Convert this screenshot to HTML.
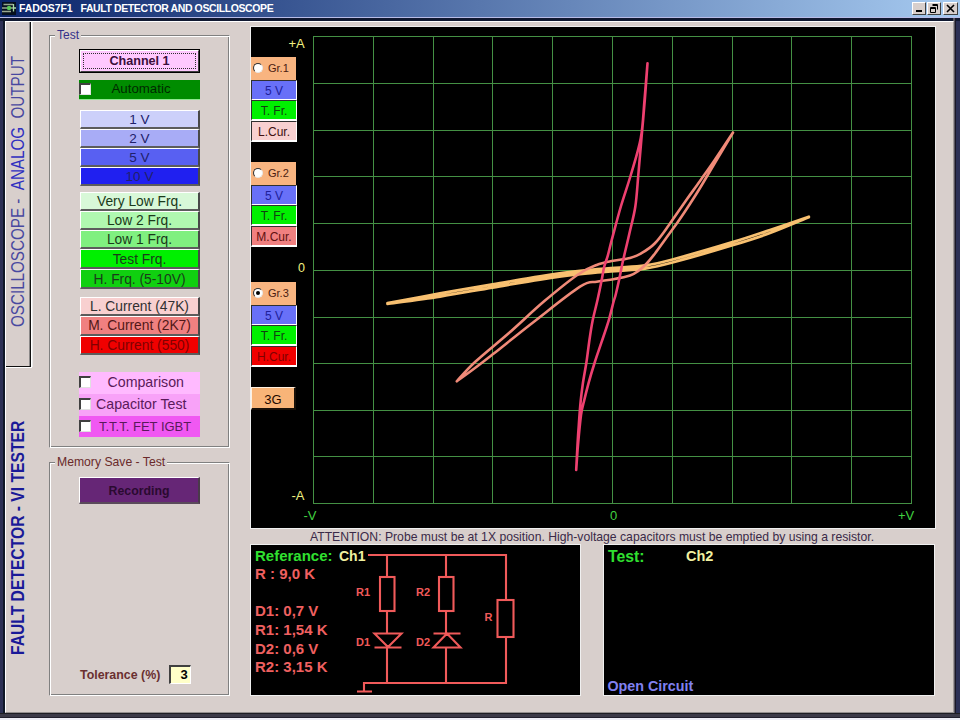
<!DOCTYPE html>
<html><head><meta charset="utf-8">
<style>
*{box-sizing:border-box;margin:0;padding:0}
html,body{width:960px;height:720px;overflow:hidden}
body{position:relative;background:#2c3055;font-family:"Liberation Sans",sans-serif}
.a{position:absolute}
.t{position:absolute;white-space:nowrap;line-height:1}
.btn{position:absolute;border-top:1px solid #fff;border-left:1px solid #fff;border-right:2px solid #484848;border-bottom:2px solid #5c5c5c;text-align:center;white-space:nowrap;line-height:1}
.sb{position:absolute;border-top:1px solid #303030;border-left:1px solid #303030;border-right:1px solid #fff;border-bottom:2px solid #fff;text-align:center;white-space:nowrap;line-height:1}
.cb{position:absolute;width:12px;height:12px;background:#fff;border-top:2px solid #404040;border-left:2px solid #404040;border-right:1px solid #e0e0e0;border-bottom:1px solid #e0e0e0}
</style></head><body>
<!-- title bar -->
<div class="a" style="left:0;top:0;width:960px;height:17px;background:linear-gradient(to right,#0a246a,#a6caf0)"></div>
<div class="a" style="left:0;top:17px;width:960px;height:1px;background:#b8bce8"></div>
<!-- app icon -->
<svg class="a" style="left:0;top:0" width="18" height="17" viewBox="0 0 18 17">
<rect x="2" y="2" width="14" height="13" fill="#06101e"/>
<path d="M3.5 4.5H13M2 8H13M2 11.5H11" stroke="#98a890" stroke-width="1.4"/>
<circle cx="9" cy="8" r="2.2" fill="#58c858"/>
<path d="M13.5 4V11.5M13.5 8H16" stroke="#a8d8a8" stroke-width="1.3"/>
</svg>
<div class="t" style="left:19px;top:3px;font-size:10.5px;font-weight:bold;color:#fff;letter-spacing:-0.1px">FADOS7F1</div><div class="t" style="left:80.5px;top:3px;font-size:10.5px;font-weight:bold;color:#fff;letter-spacing:-0.4px">FAULT DETECTOR AND OSCILLOSCOPE</div>
<!-- window buttons -->
<div class="a" style="left:912px;top:2px;width:14px;height:13px;background:#d8cfcc;border-top:1px solid #fff;border-left:1px solid #fff;border-right:1px solid #404040;border-bottom:1px solid #404040"></div>
<div class="a" style="left:916px;top:10px;width:6px;height:2px;background:#000"></div>
<div class="a" style="left:927px;top:2px;width:14px;height:13px;background:#d8cfcc;border-top:1px solid #fff;border-left:1px solid #fff;border-right:1px solid #404040;border-bottom:1px solid #404040"></div>
<svg class="a" style="left:928px;top:3px" width="12" height="11"><path d="M4.5 1.5h5v5M4.5 2.5h5M2.5 4.5h5v5h-5zM2.5 5.5h5" stroke="#000" fill="none" stroke-width="1"/></svg>
<div class="a" style="left:943px;top:2px;width:15px;height:13px;background:#d8cfcc;border-top:1px solid #fff;border-left:1px solid #fff;border-right:1px solid #404040;border-bottom:1px solid #404040"></div>
<svg class="a" style="left:944px;top:3px" width="13" height="11"><path d="M3 2l7 7M10 2l-7 7" stroke="#000" stroke-width="1.6"/></svg>

<!-- window frame -->
<div class="a" style="left:0;top:18px;width:960px;height:3px;background:#101830"></div>
<div class="a" style="left:3px;top:18px;width:2px;height:696px;background:#101828"></div>
<div class="a" style="left:953px;top:18px;width:2px;height:696px;background:#5a5660"></div>
<div class="a" style="left:955px;top:18px;width:1px;height:696px;background:#1a1826"></div>
<div class="a" style="left:5px;top:21px;width:949px;height:692px;background:#d8cfcc;border-left:1px solid #fff;border-top:1px solid #fff;border-right:1px solid #a09a9a;border-bottom:1px solid #959090"></div>
<div class="a" style="left:0;top:713px;width:960px;height:1px;background:#1e1e24"></div>
<div class="a" style="left:0;top:714px;width:960px;height:3px;background:#3c3a48"></div>
<div class="a" style="left:0;top:717px;width:960px;height:1px;background:#22202e"></div>
<div class="a" style="left:0;top:718px;width:960px;height:2px;background:#f0f0f8"></div>

<!-- left tab (inactive) -->
<div class="a" style="left:29px;top:22px;width:1px;height:344px;background:#8a8888"></div><div class="a" style="left:30px;top:22px;width:1px;height:345px;background:#101010"></div><div class="a" style="left:32px;top:22px;width:1px;height:345px;background:#ecebea"></div>
<div class="a" style="left:6px;top:366px;width:25px;height:1px;background:#101010"></div>
<div class="a" style="left:31px;top:22px;width:1px;height:346px;background:#fff"></div>
<div class="a" style="left:6px;top:367px;width:26px;height:1px;background:#fff"></div>

<div id="main"></div>
<!--LEFT-->
<div class="a" style="left:49px;top:35px;width:181px;height:413px;border-top:1px solid #808080;border-left:1px solid #808080;border-right:1px solid #fff;border-bottom:1px solid #fff;box-shadow:inset 1px 1px 0 #fff,inset -1px -1px 0 #808080"></div>
<div class="t" style="left:55px;top:29px;padding:0 2px;background:#d8cfcc;font-size:12px;color:#34308a">Test</div>
<div class="a" style="left:79px;top:49px;width:121px;height:24px;border:1px solid #000;background:#ffc8ff"><div class="a" style="left:0;top:0;width:119px;height:22px;border-top:1px solid #fff;border-left:1px solid #fff;border-right:1px solid #404040;border-bottom:1px solid #404040"></div><div class="a" style="left:3px;top:3px;width:113px;height:16px;border:1px dotted #303030"></div><div class="t" style="left:0;top:5.3px;width:119px;text-align:center;font-size:12.6px;font-weight:bold;color:#3a0e3a">Channel 1</div></div>
<div class="a" style="left:79px;top:80px;width:121px;height:20px;background:#008c00;border-bottom:1px solid #90e890"></div>
<div class="cb" style="left:79px;top:83px;width:12px;height:12px"></div>
<div class="t" style="left:79px;top:82px;width:121px;text-align:center;font-size:13.3px;color:#002a00;padding-left:3px">Automatic</div>
<div class="btn" style="left:80px;top:110px;width:120px;height:19px;background:#ccd0fa;color:#20206a;font-size:13.5px;padding-top:1.8px;">1 V</div>
<div class="btn" style="left:80px;top:129px;width:120px;height:19px;background:#a8acf6;color:#20206a;font-size:13.5px;padding-top:1.8px;">2 V</div>
<div class="btn" style="left:80px;top:148px;width:120px;height:19px;background:#5860f2;color:#20206a;font-size:13.5px;padding-top:1.8px;">5 V</div>
<div class="btn" style="left:80px;top:167px;width:120px;height:19px;background:#2020f0;color:#20206a;font-size:13.5px;padding-top:1.8px;">10 V</div>
<div class="btn" style="left:80px;top:192px;width:120px;height:19px;background:#d8f8d8;color:#1a3a1a;font-size:13.8px;padding-top:2.2px;">Very Low Frq.</div>
<div class="btn" style="left:80px;top:211px;width:120px;height:19px;background:#b0f8b0;color:#1a3a1a;font-size:13.8px;padding-top:2.2px;">Low 2 Frq.</div>
<div class="btn" style="left:80px;top:230px;width:120px;height:19px;background:#80f080;color:#1a3a1a;font-size:13.8px;padding-top:2.2px;">Low 1 Frq.</div>
<div class="btn" style="left:80px;top:249px;width:120px;height:20px;background:#00f000;color:#1a3a1a;font-size:13.8px;padding-top:2.5px;">Test Frq.</div>
<div class="btn" style="left:80px;top:269px;width:120px;height:20px;background:#10d010;color:#1a3a1a;font-size:13.8px;padding-top:2.5px;">H. Frq. (5-10V)</div>
<div class="btn" style="left:80px;top:297px;width:120px;height:19px;background:#f8d0d0;color:#303030;font-size:13.8px;padding-top:2.2px;">L. Current (47K)</div>
<div class="btn" style="left:80px;top:316px;width:120px;height:20px;background:#f08080;color:#501818;font-size:13.8px;padding-top:2.4px;">M. Current (2K7)</div>
<div class="btn" style="left:80px;top:336px;width:120px;height:19px;background:#f00000;color:#800000;font-size:13.8px;padding-top:2.2px;">H. Current (550)</div>
<div class="a" style="left:79px;top:372px;width:121px;height:22px;background:#ffbaff"></div>
<div class="cb" style="left:79px;top:376px"></div>
<div class="t" style="left:107.5px;top:374.8px;font-size:14.2px;color:#5a1a5a">Comparison</div>
<div class="a" style="left:79px;top:394px;width:121px;height:22px;background:#f8a2f8"></div>
<div class="cb" style="left:79px;top:398px"></div>
<div class="t" style="left:96px;top:397px;font-size:14.2px;color:#5a1a5a">Capacitor Test</div>
<div class="a" style="left:79px;top:416px;width:121px;height:21px;background:#f058f2"></div>
<div class="cb" style="left:79px;top:420px"></div>
<div class="t" style="left:99px;top:420px;font-size:13px;color:#5a1a5a">T.T.T. FET IGBT</div>
<div class="a" style="left:49px;top:462px;width:181px;height:234px;border-top:1px solid #808080;border-left:1px solid #808080;border-right:1px solid #fff;border-bottom:1px solid #fff;box-shadow:inset 1px 1px 0 #fff,inset -1px -1px 0 #808080"></div>
<div class="t" style="left:55px;top:456px;padding:0 2px;background:#d8cfcc;font-size:12.2px;color:#6a2a2a">Memory Save - Test</div>
<div class="btn" style="left:79px;top:477px;width:121px;height:27px;background:#662676;color:#2a0a30;border-right-color:#4a3a4a;border-bottom-color:#5a4a5a;font-size:12.3px;font-weight:bold;padding-top:6.8px">Recording</div>
<div class="t" style="left:80px;top:668.5px;font-size:12.4px;font-weight:bold;color:#6a3030">Tolerance (%)</div>
<div class="a" style="left:169px;top:665px;width:22px;height:19px;background:#ffffc8;border-top:2px solid #404040;border-left:2px solid #404040;border-right:1px solid #fff;border-bottom:1px solid #fff"></div>
<div class="t" style="left:180.5px;top:668px;font-size:13px;font-weight:bold;color:#000">3</div>
<!--/LEFT-->
<!--RIGHT-->
<div class="a" style="left:250px;top:26px;width:686px;height:503px;background:#000;border:1px solid #f0f0f0"></div>
<svg class="a" style="left:0;top:0" width="960" height="720" shape-rendering="crispEdges"><path d="M313.5 36V503.5M373.5 36V503.5M433.5 36V503.5M492.5 36V503.5M552.5 36V503.5M612.5 36V503.5M672.5 36V503.5M732.5 36V503.5M791.5 36V503.5M851.5 36V503.5M911.5 36V503.5M313 36.5H911.5M313 83.5H911.5M313 130.5H911.5M313 176.5H911.5M313 223.5H911.5M313 270.5H911.5M313 317.5H911.5M313 363.5H911.5M313 410.5H911.5M313 456.5H911.5M313 503.5H911.5" stroke="#449044" stroke-width="1" fill="none"/></svg>
<!--CURVES--><svg class="a" style="left:0;top:0" width="960" height="720"><g fill="none" stroke-linejoin="round" stroke-linecap="round"><path d="M387.5 303.2C396.2 301.6 422.5 296.6 440.0 293.5C457.5 290.4 475.8 287.3 492.5 284.5C509.2 281.7 525.4 278.8 540.0 276.5C554.6 274.2 567.5 272.4 580.0 271.0C592.5 269.6 604.2 268.9 615.0 268.0C625.8 267.1 635.4 266.9 645.0 265.5C654.6 264.1 657.9 263.4 672.5 259.5C687.1 255.6 716.2 247.2 732.5 242.2C748.8 237.3 757.3 234.2 770.0 230.0C782.7 225.8 802.3 219.0 808.8 216.8M387.5 303.8C396.2 302.6 422.5 299.2 440.0 296.5C457.5 293.8 475.8 290.3 492.5 287.5C509.2 284.7 525.4 281.8 540.0 279.5C554.6 277.2 567.5 275.4 580.0 274.0C592.5 272.6 604.2 271.9 615.0 271.0C625.8 270.1 635.4 269.9 645.0 268.5C654.6 267.1 657.9 266.4 672.5 262.5C687.1 258.6 716.2 250.2 732.5 245.2C748.8 240.3 757.3 237.7 770.0 233.0C782.7 228.3 802.3 219.8 808.8 217.2" stroke="#f8c070" stroke-width="2.8"/><path d="M456.8 381.3C459.8 378.1 466.4 370.0 475.0 362.0C483.6 354.0 496.8 343.6 508.4 333.5C520.0 323.4 532.8 310.9 544.4 301.1C556.0 291.3 569.3 280.5 578.0 274.5C586.7 268.5 590.8 267.3 596.7 265.0C602.6 262.7 607.8 262.0 613.3 260.8C618.8 259.6 625.4 259.1 630.0 257.9C634.6 256.7 636.7 256.0 640.8 253.6C644.9 251.2 650.1 248.2 654.7 243.5C659.3 238.8 663.4 232.7 668.6 225.5C673.8 218.3 680.8 207.9 686.0 200.5C691.2 193.1 695.3 187.7 700.0 181.0C704.7 174.3 708.9 168.6 714.4 160.5C719.9 152.4 729.9 137.2 733.0 132.5M733.0 132.5C730.5 136.8 723.3 148.8 717.8 158.0C712.3 167.2 704.8 180.1 700.0 188.0C695.2 195.9 692.6 199.8 688.9 205.5C685.2 211.2 681.9 216.2 677.8 222.0C673.7 227.8 668.2 235.2 664.4 240.5C660.6 245.8 658.0 249.7 655.0 253.5C652.0 257.3 649.5 260.6 646.7 263.5C643.9 266.4 641.1 269.0 638.3 271.0C635.5 273.0 634.2 274.1 630.0 275.5C625.8 276.9 618.8 278.2 613.3 279.2C607.8 280.2 602.2 280.4 596.7 281.7C591.2 282.9 590.6 279.9 580.0 286.7C569.4 293.4 547.7 311.1 533.3 322.2C518.9 333.3 503.5 345.9 493.8 353.5C484.1 361.1 481.2 363.4 475.0 368.0C468.8 372.6 459.8 379.1 456.8 381.3" stroke="#f08a78" stroke-width="2.6"/><path d="M576.2 470.0C576.4 465.8 577.1 452.5 577.5 445.0C577.9 437.5 578.2 432.5 578.8 425.0C579.3 417.5 580.1 406.9 580.8 400.0C581.5 393.1 582.0 389.6 582.9 383.3C583.8 377.1 585.3 369.4 586.4 362.5C587.5 355.6 588.2 348.6 589.2 341.7C590.2 334.8 591.2 327.8 592.6 320.8C594.0 313.9 596.0 306.8 597.5 300.0C599.0 293.2 600.6 285.6 601.7 280.0C602.8 274.4 603.2 270.6 604.2 266.7C605.2 262.8 606.2 261.1 607.5 256.7C608.8 252.2 609.5 248.4 611.7 240.0C614.0 231.6 617.8 216.8 621.0 206.0C624.2 195.2 627.5 186.3 630.8 175.0C634.1 163.7 638.5 150.5 640.8 138.0C643.1 125.5 643.4 112.5 644.5 100.0C645.6 87.5 647.0 69.4 647.5 63.3M647.5 63.3C647.0 69.4 645.8 87.5 644.8 100.0C643.8 112.5 642.6 125.5 641.5 138.0C640.4 150.5 639.3 163.6 638.3 175.0C637.3 186.4 636.8 197.0 635.3 206.7C633.8 216.4 631.5 224.0 629.5 233.0C627.5 242.0 624.7 253.3 623.0 260.8C621.3 268.3 620.7 272.4 619.5 278.0C618.3 283.6 616.8 290.2 615.8 294.2C614.8 298.2 614.7 297.6 613.5 302.0C612.3 306.4 610.6 314.2 608.6 320.8C606.6 327.4 604.0 334.8 601.7 341.7C599.4 348.6 596.9 355.6 594.7 362.5C592.5 369.4 590.2 377.1 588.5 383.3C586.8 389.6 585.5 394.7 584.3 400.0C583.0 405.3 582.0 407.5 581.0 415.0C580.0 422.5 578.8 435.8 578.0 445.0C577.2 454.2 576.5 465.8 576.2 470.0" stroke="#ee4070" stroke-width="2.6"/></g></svg><!--/CURVES-->
<div class="t" style="left:288.5px;top:36.5px;font-size:13px;color:#f0f080">+A</div>
<div class="t" style="left:298px;top:261.5px;font-size:12.5px;color:#f0f080">0</div>
<div class="t" style="left:291.5px;top:488.5px;font-size:13px;color:#f0f080">-A</div>
<div class="t" style="left:303.5px;top:508.5px;font-size:13px;color:#40d040">-V</div>
<div class="t" style="left:610px;top:508.5px;font-size:13px;color:#40d040">0</div>
<div class="t" style="left:898px;top:508.5px;font-size:13px;color:#40d040">+V</div>
<div class="a" style="left:251px;top:57px;width:45px;height:23px;background:#f8b480"></div>
<div class="a" style="left:252.5px;top:63px;width:10px;height:10px;border-radius:50%;background:#fff;border-top:1.5px solid #303030;border-left:1.5px solid #303030;border-right:1px solid #e8e8e8;border-bottom:1px solid #e8e8e8"></div>
<div class="t" style="left:268px;top:63px;font-size:11px;color:#4a2010">Gr.1</div>
<div class="sb" style="left:251px;top:80px;width:46px;height:21px;background:#6870f8;color:#20209a;font-size:12px;padding-top:4px">5 V</div>
<div class="sb" style="left:251px;top:100px;width:46px;height:21px;background:#00f000;color:#104010;font-size:12px;padding-top:4px">T. Fr.</div>
<div class="sb" style="left:251px;top:121px;width:46px;height:21px;background:#f8d0d0;color:#401010;font-size:12px;padding-top:4px">L.Cur.</div>
<div class="a" style="left:251px;top:162px;width:45px;height:23px;background:#f8b480"></div>
<div class="a" style="left:252.5px;top:168px;width:10px;height:10px;border-radius:50%;background:#fff;border-top:1.5px solid #303030;border-left:1.5px solid #303030;border-right:1px solid #e8e8e8;border-bottom:1px solid #e8e8e8"></div>
<div class="t" style="left:268px;top:168px;font-size:11px;color:#4a2010">Gr.2</div>
<div class="sb" style="left:251px;top:185px;width:46px;height:21px;background:#6870f8;color:#20209a;font-size:12px;padding-top:4px">5 V</div>
<div class="sb" style="left:251px;top:205px;width:46px;height:21px;background:#00f000;color:#104010;font-size:12px;padding-top:4px">T. Fr.</div>
<div class="sb" style="left:251px;top:226px;width:46px;height:21px;background:#f08080;color:#601010;font-size:12px;padding-top:4px">M.Cur.</div>
<div class="a" style="left:251px;top:282px;width:45px;height:23px;background:#f8b480"></div>
<div class="a" style="left:252.5px;top:288px;width:10px;height:10px;border-radius:50%;background:#fff;border-top:1.5px solid #303030;border-left:1.5px solid #303030;border-right:1px solid #e8e8e8;border-bottom:1px solid #e8e8e8"></div>
<div class="a" style="left:255.5px;top:291px;width:4px;height:4px;border-radius:50%;background:#000"></div>
<div class="t" style="left:268px;top:288px;font-size:11px;color:#4a2010">Gr.3</div>
<div class="sb" style="left:251px;top:305px;width:46px;height:21px;background:#6870f8;color:#20209a;font-size:12px;padding-top:4px">5 V</div>
<div class="sb" style="left:251px;top:325px;width:46px;height:21px;background:#00f000;color:#104010;font-size:12px;padding-top:4px">T. Fr.</div>
<div class="sb" style="left:251px;top:346px;width:46px;height:21px;background:#f00000;color:#800000;font-size:12px;padding-top:4px">H.Cur.</div>
<div class="btn" style="left:251px;top:387px;width:45px;height:23px;background:#f8b478;color:#200800;font-size:13px;padding-top:4.5px;border-top-color:#fff0e0;border-left-color:#fff0e0;border-right-color:#181008;border-bottom-color:#181008">3G</div>
<div class="t" style="left:310px;top:531px;font-size:12.2px;color:#3a2a48">ATTENTION: Probe must be at 1X position. High-voltage capacitors must be emptied by using a resistor.</div>
<div class="a" style="left:250px;top:544px;width:331px;height:152px;background:#000;border:1px solid #f0f0f0"></div>
<div class="a" style="left:603px;top:544px;width:332px;height:152px;background:#000;border:1px solid #f0f0f0"></div>
<div class="t" style="left:255px;top:547.5px;font-size:15px;font-weight:bold;color:#30e030">Referance:</div>
<div class="t" style="left:339px;top:549px;font-size:14px;font-weight:bold;color:#f0f0a0">Ch1</div>
<div class="t" style="left:255px;top:565.9px;font-size:15px;font-weight:bold;color:#f06060">R : 9,0 K</div>
<div class="t" style="left:255px;top:603.0px;font-size:15px;font-weight:bold;color:#f06060">D1: 0,7 V</div>
<div class="t" style="left:255px;top:621.9px;font-size:15px;font-weight:bold;color:#f06060">R1: 1,54 K</div>
<div class="t" style="left:255px;top:640.7px;font-size:15px;font-weight:bold;color:#f06060">D2: 0,6 V</div>
<div class="t" style="left:255px;top:659.3px;font-size:15px;font-weight:bold;color:#f06060">R2: 3,15 K</div>
<div class="t" style="left:608px;top:548.8px;font-size:15.8px;font-weight:bold;color:#30e030">Test:</div>
<div class="t" style="left:686px;top:548.5px;font-size:14.5px;font-weight:bold;color:#f0f0a0">Ch2</div>
<div class="t" style="left:607.5px;top:679px;font-size:14.3px;font-weight:bold;color:#8080f0">Open Circuit</div>
<svg class="a" style="left:0;top:0" width="960" height="720"><g stroke="#f05a5a" stroke-width="2.1" fill="none"><path d="M368 555H506V600M387 555V577M446 555V577M387 611V633M446 611V633M387 647V683M446 647V683M506 637V683H364V691M357 691.5H372"/><rect x="380" y="577" width="14.5" height="34"/><rect x="439" y="577" width="14.5" height="34"/><rect x="497.5" y="600" width="16" height="37"/><path d="M374.5 633.5H401.5L388 647ZM374.5 647.5H401.5M433.5 633.5H460.5M447 633.5L433.5 647.5H460.5Z"/></g><g fill="#f05a5a" font-family="Liberation Sans" font-weight="bold" font-size="11"><text x="356" y="596">R1</text><text x="416" y="596">R2</text><text x="356" y="646">D1</text><text x="416" y="646">D2</text><text x="484.5" y="621">R</text></g></svg>
<div class="t" style="left:8px;top:327px;transform-origin:0 0;transform:rotate(-90deg) scale(0.98,1.2);font-size:15.5px;color:#4848a0">OSCILLOSCOPE&nbsp;-&nbsp;&nbsp;<span style="color:#3030c0">ANALOG</span>&nbsp;&nbsp;OUTPUT</div>
<div class="t" style="left:9px;top:655px;transform-origin:0 0;transform:rotate(-90deg) scale(1.01,1.18);font-size:15.5px;font-weight:bold;color:#1a1a98">FAULT DETECTOR - VI TESTER</div>
<!--/RIGHT-->
</body></html>
